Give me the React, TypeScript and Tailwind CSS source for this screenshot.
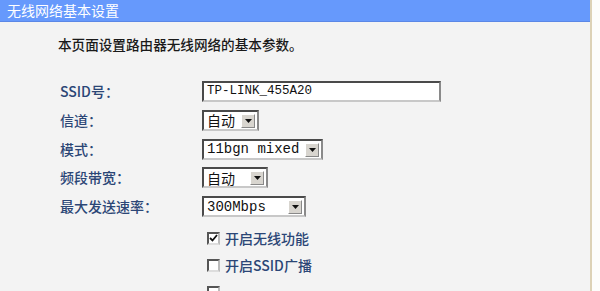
import React from 'react';

const CJK = '"Noto Sans CJK SC", "Noto Sans", sans-serif';
const MONO = '"Liberation Mono", "Noto Sans CJK SC", monospace';

function Arrow() {
  return (
    <span className="absolute right-[2px] top-[2px] w-[14px] h-[14px] bg-[#d8d5cf] border border-t-white border-l-white border-b-[#888] border-r-[#888] flex items-center justify-center">
      <svg width="7" height="4" viewBox="0 0 7 4">
        <path d="M0 0h7L3.5 4z" fill="#111" />
      </svg>
    </span>
  );
}

function FakeSelect({ value, width, mono }: { value: string; width: string; mono?: boolean }) {
  return (
    <div
      className={`relative h-[21px] ${width} bg-white border-2 border-t-[#4a4a4a] border-l-[#4a4a4a] border-b-[#c8c8c8] border-r-[#8a8a8a] pl-[3px] flex items-center text-[14px] text-[#111]`}
      style={{ fontFamily: mono ? MONO : CJK }}
    >
      <span className="leading-none">{value}</span>
      <Arrow />
    </div>
  );
}

function Checkbox({ checked }: { checked?: boolean }) {
  return (
    <span className="w-[13px] h-[13px] bg-white border-2 border-t-[#555] border-l-[#555] border-b-[#ddd] border-r-[#bbb] flex items-center justify-center">
      {checked && (
        <svg width="9" height="8" viewBox="0 0 9 8">
          <path d="M1 4l2.5 2.5L8 1" stroke="#111" strokeWidth="1.8" fill="none" />
        </svg>
      )}
    </span>
  );
}

const rows: { label: string; control: React.ReactNode }[] = [
  {
    label: 'SSID号：',
    control: (
      <div
        className="h-[21px] w-[239px] bg-white border-2 border-t-[#4a4a4a] border-l-[#4a4a4a] border-b-[#c8c8c8] border-r-[#8a8a8a] pl-[3px] flex items-center text-[12.5px] text-[#111]"
        style={{ fontFamily: MONO }}
      >
        TP-LINK_455A20
      </div>
    ),
  },
  { label: '信道：', control: <FakeSelect value="自动" width="w-[57px]" /> },
  { label: '模式：', control: <FakeSelect value="11bgn mixed" width="w-[121px]" mono /> },
  { label: '频段带宽：', control: <FakeSelect value="自动" width="w-[66px]" /> },
  { label: '最大发送速率：', control: <FakeSelect value="300Mbps" width="w-[104px]" mono /> },
];

export default function App() {
  return (
    <div className="w-[600px] h-[291px] overflow-hidden bg-[#fdfdfb] flex" style={{ fontFamily: CJK }}>
      <div className="w-[592px] h-full bg-[#f3f3f3] border-r-2 border-[#ddd2b6] flex flex-col">
        <div className="h-[25px] bg-[#6699fc] border-b border-[#5b87e6] px-[7px] flex items-center text-white text-[14px]">
          无线网络基本设置
        </div>
        <div className="h-[2px] bg-[#fafaf8]" />
        <div className="pl-[58px] pt-[12px]">
          <p className="h-[20px] leading-[20px] text-[13.6px] text-[#1a1a1a] font-medium">
            本页面设置路由器无线网络的基本参数。
          </p>
          <div className="mt-[27px] flex flex-col gap-[7.75px]">
            {rows.map((r) => (
              <div key={r.label} className="flex items-center h-[21px]">
                <span className="w-[144px] pl-[2px] text-[14px] text-[#2b4676] font-medium">{r.label}</span>
                {r.control}
              </div>
            ))}
          </div>
          <div className="mt-[11px] pl-[149px] flex flex-col gap-[7px]">
            <label className="h-[20px] flex items-center gap-[5px] text-[14px] text-[#2b4676] font-medium">
              <Checkbox checked />
              <span>开启无线功能</span>
            </label>
            <label className="h-[20px] flex items-center gap-[5px] text-[14px] text-[#2b4676] font-medium">
              <Checkbox />
              <span>开启SSID广播</span>
            </label>
            <div className="h-[20px] flex items-center">
              <Checkbox />
            </div>
          </div>
        </div>
      </div>
    </div>
  );
}
